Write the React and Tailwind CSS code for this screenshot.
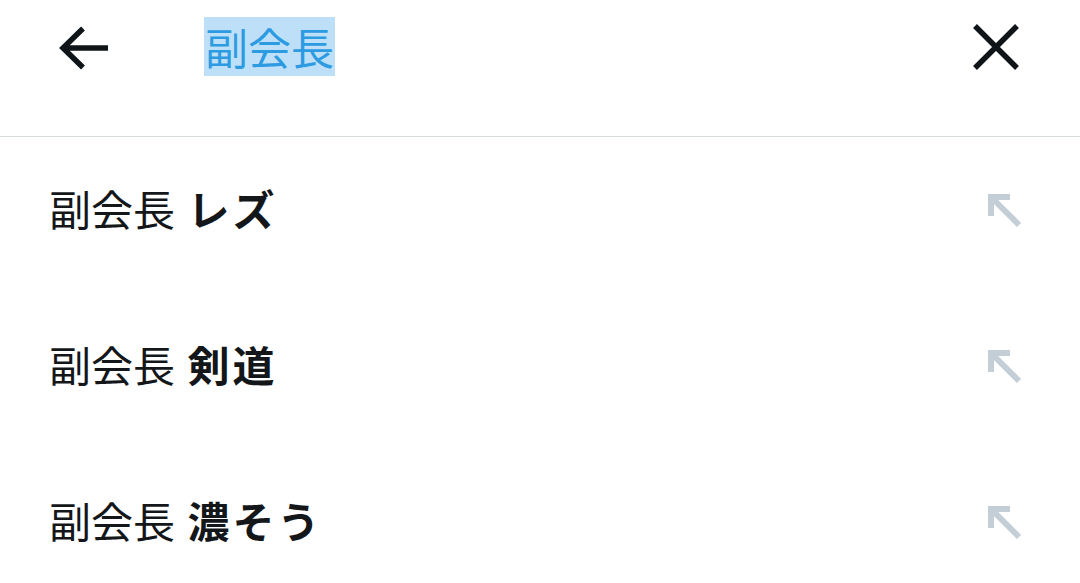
import React from "react";

const suggestions = ["レズ", "剣道", "濃そう"];

function BackArrow() {
  return (
    <svg width="52" height="48" viewBox="0 0 52 48" fill="none">
      <path d="M50 24H6M25 4.5L5 24L25 43.5" stroke="#0f1419" strokeWidth="5.5" />
    </svg>
  );
}

function CloseIcon() {
  return (
    <svg width="48" height="48" viewBox="0 0 48 48" fill="none">
      <path d="M3 3L45 45M45 3L3 45" stroke="#0f1419" strokeWidth="5.5" />
    </svg>
  );
}

function FillArrow() {
  return (
    <svg width="36" height="36" viewBox="0 0 36 36" fill="none">
      <path d="M33 33L5 5M2 5H24M5 2V24" stroke="#c3ced6" strokeWidth="6" />
    </svg>
  );
}

export default function App() {
  return (
    <div
      className="w-[1080px] h-[583px] overflow-hidden bg-white"
      style={{ fontFamily: '"Noto Sans CJK JP", "Noto Sans", sans-serif' }}
    >
      <div className="h-[137px] border-b border-[#d6dbdc] flex items-start pt-[23px]">
        <div className="ml-[58px] w-[52px] mt-[1px]">
          <BackArrow />
        </div>
        <div className="ml-[94px] flex-1 flex items-start -mt-[6px]">
          <span className="bg-[#bde0f8] text-[#2d9be2] text-[43px] leading-[59px] px-[1px]">
            副会長
          </span>
        </div>
        <div className="mr-[60px]">
          <CloseIcon />
        </div>
      </div>
      {suggestions.map((s) => (
        <div key={s} className="h-[156px] flex items-center pl-[49px] pr-[58px] pb-[14px]">
          <div className="flex-1 text-[42px] text-[#14171a] leading-none">
            副会長 <span className="font-bold tracking-[3px] ml-[3px]">{s}</span>
          </div>
          <div className="pt-[4px]">
            <FillArrow />
          </div>
        </div>
      ))}
    </div>
  );
}
